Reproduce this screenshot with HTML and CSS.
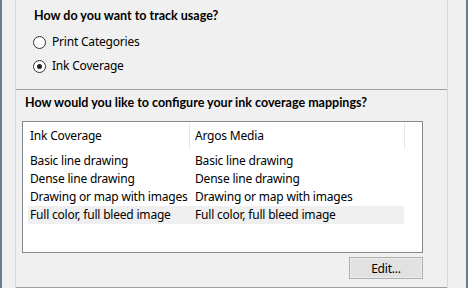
FILE: index.html
```html
<!DOCTYPE html>
<html>
<head>
<meta charset="utf-8">
<link rel="stylesheet" href="styles.css">
</head>
<body>
<div class="frame">
  <div class="panel">
    <section class="track">
      <div class="heading">How do you want to track usage?</div>
      <label class="radio"><span class="dot"></span><span>Print Categories</span></label>
      <label class="radio checked"><span class="dot"></span><span>Ink Coverage</span></label>
    </section>
    <section class="mapping">
      <div class="heading h2">How would you like to configure your ink coverage mappings?</div>
      <div class="list">
        <div class="header">
          <div class="hcell c1">Ink Coverage</div>
          <div class="hcell c2">Argos Media</div>
          <div class="hrest"></div>
        </div>
        <div class="rows">
          <div class="row"><div class="cell">Basic line drawing</div><div class="cell second">Basic line drawing</div></div>
          <div class="row"><div class="cell">Dense line drawing</div><div class="cell second">Dense line drawing</div></div>
          <div class="row"><div class="cell">Drawing or map with images</div><div class="cell second">Drawing or map with images</div></div>
          <div class="row sel"><div class="cell">Full color, full bleed image</div><div class="cell second">Full color, full bleed image</div></div>
        </div>
      </div>
      <div class="actions"><button class="btn">Edit...</button></div>
    </section>
  </div>
</div>
</body>
</html>
```
FILE: styles.css
```css
html, body {
  margin: 0;
  padding: 0;
  background: #f0f0f0;
}
body {
  width: 468px;
  height: 288px;
  overflow: hidden;
  font-family: "Noto Sans", "Open Sans", sans-serif;
  font-size: 12px;
  letter-spacing: -0.2px;
  color: #000;
}
.frame {
  box-sizing: border-box;
  width: 468px;
  height: 288px;
  border-left: 2px solid #6e7c87;
  border-right: 2px solid #6e7c87;
  padding-left: 13px;
  padding-right: 18px;
}
.panel {
  box-sizing: border-box;
  height: 288px;
  border-left: 1px solid #d9d9d9;
  border-right: 1px solid #d9d9d9;
  display: flex;
  flex-direction: column;
}
.track {
  border-bottom: 1px solid #a0a0a0;
  padding: 8px 0 0 18px;
  height: 81px;
}
.heading {
  font-family: "Lato", "Noto Sans", sans-serif;
  font-weight: bold;
  font-size: 12.5px;
  letter-spacing: 0;
  line-height: 16px;
  height: 16px;
  white-space: nowrap;
}
.radio {
  display: flex;
  align-items: center;
  gap: 6px;
  height: 16px;
  line-height: 16px;
  margin-left: -1px;
}
.radio:first-of-type { margin-top: 10px; }
.radio + .radio { margin-top: 8px; }
.dot {
  width: 11px;
  height: 11px;
  border: 1px solid #333;
  border-radius: 50%;
  background: #fff;
  position: relative;
  flex: none;
}
.checked .dot::after {
  content: "";
  position: absolute;
  left: 3px;
  top: 3px;
  width: 5px;
  height: 5px;
  border-radius: 50%;
  background: #222;
}
.mapping {
  flex: 1;
  border-bottom: 1px solid #a0a0a0;
  padding: 5px 0 0 6px;
}
.h2 { margin-left: 3px; }
.list {
  margin-top: 10px;
  width: 399px;
  height: 130px;
  border: 1px solid #828790;
  background: #fff;
}
.header {
  display: flex;
  height: 27px;
  margin-top: 1px;
}
.hcell {
  line-height: 26px;
  padding-left: 7px;
  border-right: 1px solid #e5e5e5;
  box-sizing: border-box;
  height: 26px;
}
.c1 { width: 167px; }
.c2 { width: 215px; padding-left: 5px; }
.rows {
  margin-top: 2px;
  padding-left: 5px;
}
.row {
  display: flex;
  width: 376px;
  height: 18px;
  line-height: 18px;
}
.row.sel { background: #efefef; }
.cell {
  width: 161px;
  padding-left: 2px;
  box-sizing: border-box;
  white-space: nowrap;
}
.cell.second { width: 215px; padding-left: 6px; }
.actions {
  display: flex;
  justify-content: flex-end;
  width: 401px;
  margin-top: 4px;
}
.btn {
  width: 74px;
  height: 22px;
  border: 1px solid #adadad;
  background: #e1e1e1;
  box-shadow: inset 0 0 0 1px #ececec;
  font-family: inherit;
  font-size: 12px;
  letter-spacing: -0.2px;
  color: #000;
  padding: 0;
}
```
